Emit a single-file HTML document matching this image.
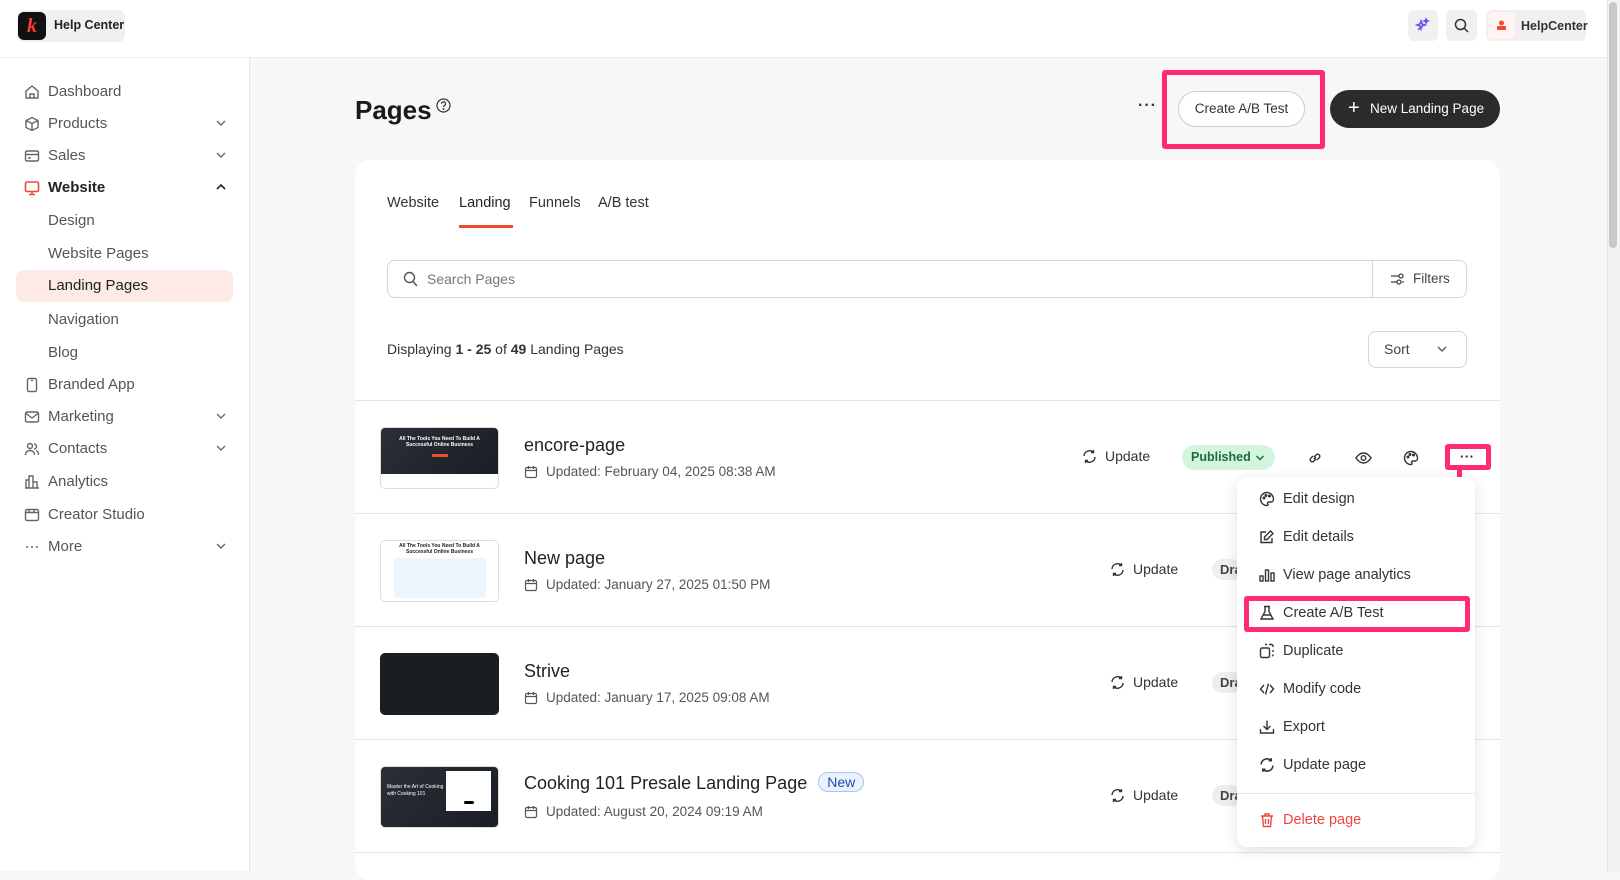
<!DOCTYPE html>
<html><head><meta charset="utf-8"><style>
*{box-sizing:border-box;margin:0;padding:0}
body{width:1620px;height:871px;overflow:hidden;background:#f7f7f7;font-family:"Liberation Sans",sans-serif;color:#222;position:relative}
.abs{position:absolute}
.top{left:0;top:0;width:1607px;height:58px;background:#fff;border-bottom:1px solid #eee}
.side{left:0;top:58px;width:250px;height:813px;background:#fff;border-right:1px solid #e6e6e6}
.ni{position:absolute;left:0;width:250px;font-size:15px;color:#555;height:24px;line-height:24px}
.ni svg{position:absolute;left:24px;top:4px}
.ni .t{position:absolute;left:48px}
.ni .ch{position:absolute;left:214px;top:4px}
.card{left:355px;top:160px;width:1145px;height:720px;background:#fff;border-radius:16px}
.row{position:absolute;left:355px;width:1145px;height:113px;border-top:1px solid #e3e3e3}
.thumb{position:absolute;left:25px;top:26px;width:119px;height:62px;border-radius:5px;border:1px solid #ddd;overflow:hidden}
.rt{position:absolute;left:169px;top:34px;font-size:18px;color:#222}
.rd{position:absolute;left:169px;top:63px;font-size:13.5px;color:#555}
.rd svg{vertical-align:-3px;margin-right:8px}
.upd{position:absolute;font-size:14px;color:#333;top:47px}
.upd svg{vertical-align:-3px;margin-right:8px}
.draft{position:absolute;left:857px;top:45px;background:#eee;border-radius:12px;padding:3px 8px;font-size:13px;font-weight:bold;color:#444;width:30px;overflow:hidden}
.mi{position:absolute;left:0;width:238px;height:30px;font-size:14.5px;color:#333;line-height:30px}
.mi svg{position:absolute;left:22px;top:7px}
.mi span{position:absolute;left:46px}
.pink{border:5px solid #ff2d6f;border-radius:3px}
</style></head><body>
<div class="abs top"></div>
<div class="abs" style="left:17px;top:10px;width:108px;height:32px;background:#f0f0f0;border-radius:7px"></div>
<div class="abs" style="left:18px;top:12px;width:28px;height:28px;background:#111;border-radius:6px;color:#ff3d2e;font:italic bold 20px 'Liberation Serif',serif;text-align:center;line-height:28px">k</div>
<div class="abs" style="left:54px;top:18px;font-size:12.5px;font-weight:bold;color:#222">Help Center</div>
<div class="abs" style="left:1408px;top:10px;width:30px;height:31px;background:#f0f0f0;border-radius:6px"></div>
<svg class="abs" style="left:1415px;top:17px" width="16" height="16" viewBox="0 0 16 16" fill="none" stroke="#6a4cf0" stroke-width="1.5"><path d="M3 13l3-3M6 4l1 3 3 1-3 1-1 3-1-3-3-1 3-1zM11 2l.7 1.5L13 4l-1.3.5L11 6l-.5-1.5L9 4l1.5-.5z"/></svg>
<div class="abs" style="left:1446px;top:10px;width:31px;height:31px;background:#f0f0f0;border-radius:6px"></div>
<svg class="abs" style="left:1454px;top:18px" width="15" height="15" viewBox="0 0 15 15" fill="none" stroke="#333" stroke-width="1.5"><circle cx="6.5" cy="6.5" r="5"/><path d="M10 10l4 4"/></svg>
<div class="abs" style="left:1486px;top:10px;width:100px;height:31px;background:#f0f0f0;border-radius:6px"></div>
<div class="abs" style="left:1488px;top:12px;width:27px;height:27px;background:#fff4f2;border-radius:5px"></div>
<svg class="abs" style="left:1497px;top:20px" width="9" height="10" viewBox="0 0 9 10" fill="#f04a2f"><circle cx="4.5" cy="3" r="2.5"/><rect x="0" y="6" width="9" height="4" rx="1"/></svg>
<div class="abs" style="left:1521px;top:19px;font-size:12.5px;font-weight:bold;color:#333">HelpCenter</div>
<div class="abs" style="left:1607px;top:0;width:13px;height:871px;background:#f2f2f2;border-left:1px solid #e2e2e2"></div>
<div class="abs" style="left:1609px;top:2px;width:8px;height:246px;background:#c8c8c8;border-radius:4px"></div>

<div class="abs side"></div>
<div class="abs" style="left:16px;top:270px;width:217px;height:32px;background:#fde9e5;border-radius:8px"></div>
<div class="ni" style="top:80px"><svg width="16" height="16" viewBox="0 0 16 16" fill="none" stroke="#666" stroke-width="1.4"><path d="M2 7l6-5 6 5v7H2z M6 14v-4h4v4"/></svg><span class="t">Dashboard</span></div>
<div class="ni" style="top:112px"><svg width="16" height="16" viewBox="0 0 16 16" fill="none" stroke="#666" stroke-width="1.4"><path d="M8 1.5l6 3v7l-6 3-6-3v-7zM2 4.5l6 3 6-3M8 7.5v7"/></svg><span class="t">Products</span><svg class="ch" width="14" height="14" viewBox="0 0 14 14" fill="none" stroke="#666" stroke-width="1.4"><path d="M3 5l4 4 4-4"/></svg></div>
<div class="ni" style="top:144px"><svg width="16" height="16" viewBox="0 0 16 16" fill="none" stroke="#666" stroke-width="1.4"><rect x="1.5" y="3" width="13" height="10" rx="1.5"/><path d="M1.5 6.5h13M4 10h3"/></svg><span class="t">Sales</span><svg class="ch" width="14" height="14" viewBox="0 0 14 14" fill="none" stroke="#666" stroke-width="1.4"><path d="M3 5l4 4 4-4"/></svg></div>
<div class="ni" style="top:176px;color:#222;font-weight:bold"><svg width="16" height="16" viewBox="0 0 16 16" fill="none" stroke="#f04a2f" stroke-width="1.6"><rect x="1.5" y="2" width="13" height="9.5" rx="1.5"/><path d="M5 14.5h6M8 11.5v3"/></svg><span class="t">Website</span><svg class="ch" width="14" height="14" viewBox="0 0 14 14" fill="none" stroke="#222" stroke-width="1.6"><path d="M3 9l4-4 4 4"/></svg></div>
<div class="ni" style="top:209px"><span class="t">Design</span></div>
<div class="ni" style="top:242px"><span class="t">Website Pages</span></div>
<div class="ni" style="top:274px;color:#222"><span class="t">Landing Pages</span></div>
<div class="ni" style="top:308px"><span class="t">Navigation</span></div>
<div class="ni" style="top:341px"><span class="t">Blog</span></div>
<div class="ni" style="top:373px"><svg width="16" height="16" viewBox="0 0 16 16" fill="none" stroke="#666" stroke-width="1.4"><rect x="3.5" y="1.5" width="9" height="13" rx="1.5"/><path d="M7 3.5h2"/></svg><span class="t">Branded App</span></div>
<div class="ni" style="top:405px"><svg width="16" height="16" viewBox="0 0 16 16" fill="none" stroke="#666" stroke-width="1.4"><rect x="1.5" y="3" width="13" height="10" rx="1.5"/><path d="M1.5 4l6.5 5 6.5-5"/></svg><span class="t">Marketing</span><svg class="ch" width="14" height="14" viewBox="0 0 14 14" fill="none" stroke="#666" stroke-width="1.4"><path d="M3 5l4 4 4-4"/></svg></div>
<div class="ni" style="top:437px"><svg width="16" height="16" viewBox="0 0 16 16" fill="none" stroke="#666" stroke-width="1.4"><circle cx="6" cy="5" r="2.5"/><path d="M1.5 14c0-3 2-4.5 4.5-4.5s4.5 1.5 4.5 4.5M10 3a2.5 2.5 0 010 5M12 9.5c1.5.5 2.5 2 2.5 4.5"/></svg><span class="t">Contacts</span><svg class="ch" width="14" height="14" viewBox="0 0 14 14" fill="none" stroke="#666" stroke-width="1.4"><path d="M3 5l4 4 4-4"/></svg></div>
<div class="ni" style="top:470px"><svg width="16" height="16" viewBox="0 0 16 16" fill="none" stroke="#666" stroke-width="1.4"><path d="M2 14V6h3v8M5 14V2h4v12M9 14V8h4v6zM1 14h14"/></svg><span class="t">Analytics</span></div>
<div class="ni" style="top:503px"><svg width="16" height="16" viewBox="0 0 16 16" fill="none" stroke="#666" stroke-width="1.4"><rect x="1.5" y="2.5" width="13" height="11" rx="1.5"/><path d="M1.5 5.5h13M5 2.5v3M10 2.5v3"/></svg><span class="t">Creator Studio</span></div>
<div class="ni" style="top:535px"><svg width="16" height="16" viewBox="0 0 16 16" fill="#666"><circle cx="3" cy="8" r="1"/><circle cx="8" cy="8" r="1"/><circle cx="13" cy="8" r="1"/></svg><span class="t">More</span><svg class="ch" width="14" height="14" viewBox="0 0 14 14" fill="none" stroke="#666" stroke-width="1.4"><path d="M3 5l4 4 4-4"/></svg></div>

<div class="abs" style="left:355px;top:95px;font-size:26px;font-weight:bold;color:#1a1a1a">Pages</div>
<svg class="abs" style="left:436px;top:98px" width="15" height="15" viewBox="0 0 15 15" fill="none" stroke="#333" stroke-width="1.2"><circle cx="7.5" cy="7.5" r="6.5"/><path d="M5.5 5.8a2 2 0 113 1.7c-.7.4-1 .8-1 1.5"/><circle cx="7.5" cy="11" r=".4" fill="#333"/></svg>
<div class="abs" style="left:1138px;top:97px;font-size:16px;font-weight:bold;color:#333;letter-spacing:1px">···</div>
<div class="abs pink" style="left:1162px;top:70px;width:163px;height:79px"></div>
<div class="abs" style="left:1178px;top:91px;width:127px;height:36px;background:#fff;border:1px solid #ccc;border-radius:18px;font-size:13.5px;color:#333;text-align:center;line-height:34px">Create A/B Test</div>
<div class="abs" style="left:1330px;top:90px;width:170px;height:38px;background:#2b2b2b;border-radius:19px;color:#fff;font-size:13.5px;line-height:38px"><span style="position:absolute;left:18px;font-size:20px;top:-1px">+</span><span style="position:absolute;left:40px">New Landing Page</span></div>

<div class="abs card"></div>
<div class="abs" style="left:387px;top:195px;font-size:14.5px;color:#333">Website</div>
<div class="abs" style="left:459px;top:195px;font-size:14.5px;color:#222">Landing</div>
<div class="abs" style="left:459px;top:225px;width:54px;height:3px;background:#f04a2f"></div>
<div class="abs" style="left:529px;top:195px;font-size:14.5px;color:#333">Funnels</div>
<div class="abs" style="left:598px;top:195px;font-size:14.5px;color:#333">A/B test</div>
<div class="abs" style="left:387px;top:260px;width:1080px;height:38px;border:1px solid #d6d6d6;border-radius:8px"></div>
<div class="abs" style="left:1372px;top:261px;width:1px;height:36px;background:#d6d6d6"></div>
<svg class="abs" style="left:403px;top:271px" width="15" height="16" viewBox="0 0 15 16" fill="none" stroke="#555" stroke-width="1.4"><circle cx="6.5" cy="6.5" r="5"/><path d="M10 10.5l4 4.5"/></svg>
<div class="abs" style="left:427px;top:271px;font-size:14px;color:#777">Search Pages</div>
<svg class="abs" style="left:1390px;top:272px" width="15" height="14" viewBox="0 0 15 14" fill="none" stroke="#444" stroke-width="1.3"><path d="M1 4h8M12 10h2M1 10h6"/><circle cx="11" cy="4" r="2"/><circle cx="9" cy="10" r="2"/></svg>
<div class="abs" style="left:1413px;top:271px;font-size:13.5px;color:#444">Filters</div>
<div class="abs" style="left:387px;top:341px;font-size:14px;color:#333">Displaying <b>1 - 25</b> of <b>49</b> Landing Pages</div>
<div class="abs" style="left:1368px;top:331px;width:99px;height:37px;border:1px solid #d6d6d6;border-radius:8px;font-size:14px;color:#444;line-height:35px;padding-left:15px">Sort</div>
<svg class="abs" style="left:1436px;top:343px" width="12" height="12" viewBox="0 0 12 12" fill="none" stroke="#555" stroke-width="1.3"><path d="M2 4l4 4 4-4"/></svg>

<div class="row" style="top:400px">
 <div class="thumb" style="background:#fff"><div style="height:46px;background:linear-gradient(135deg,#2a2f38,#1a1e24)"><div style="color:#fff;font-size:5px;text-align:center;padding-top:8px;font-weight:bold">All The Tools You Need To Build A<br>Successful Online Business</div><div style="width:16px;height:3px;background:#f04a2f;margin:6px auto 0"></div></div></div>
 <div class="rt">encore-page</div>
 <div class="rd"><svg width="14" height="14" viewBox="0 0 14 14" fill="none" stroke="#555" stroke-width="1.2"><rect x="1.5" y="2.5" width="11" height="10" rx="1.5"/><path d="M1.5 5.5h11M4.5 1v3M9.5 1v3"/></svg>Updated: February 04, 2025 08:38 AM</div>
 <div class="upd" style="left:727px"><svg width="15" height="15" viewBox="0 0 15 15" fill="none" stroke="#333" stroke-width="1.4"><path d="M2 7a5.5 5.5 0 019.5-3.5M13 8a5.5 5.5 0 01-9.5 3.5M11.5 1v2.5H9M3.5 14v-2.5H6"/></svg>Update</div>
 <div style="position:absolute;left:827px;top:44px;width:93px;height:25px;background:#d4f5dd;border-radius:13px;font-size:12.5px;font-weight:bold;color:#1f6b39;line-height:25px;padding-left:9px">Published <svg style="position:absolute;left:73px;top:8px" width="10" height="10" viewBox="0 0 10 10" fill="none" stroke="#1f6b39" stroke-width="1.5"><path d="M1.5 3l3.5 3.5L8.5 3"/></svg></div>
 <svg style="position:absolute;left:952px;top:49px" width="16" height="16" viewBox="0 0 16 16" fill="none" stroke="#333" stroke-width="1.4"><path d="M7 9l2-2M6 6l-2.5 2.5a2.2 2.2 0 003 3L9 9M10 10l2.5-2.5a2.2 2.2 0 00-3-3L7 7"/></svg>
 <svg style="position:absolute;left:1000px;top:49px" width="17" height="16" viewBox="0 0 17 16" fill="none" stroke="#333" stroke-width="1.4"><path d="M1 8s3-5 7.5-5S16 8 16 8s-3 5-7.5 5S1 8 1 8z"/><circle cx="8.5" cy="8" r="2.3"/></svg>
 <svg style="position:absolute;left:1048px;top:49px" width="16" height="16" viewBox="0 0 16 16" fill="none" stroke="#333" stroke-width="1.4"><path d="M8 1.5a6.5 6.5 0 000 13c1 0 1.3-.8.8-1.5-.6-.8 0-2 1-2H12a2.5 2.5 0 002.5-2.5C14.5 4.5 11.5 1.5 8 1.5z"/><circle cx="5" cy="7" r=".8"/><circle cx="7" cy="4.5" r=".8"/><circle cx="10.5" cy="5" r=".8"/></svg>
</div>
<div class="abs pink" style="left:1445px;top:444px;width:46px;height:26px;background:#fff"></div>
<div class="abs" style="left:1460px;top:449px;font-size:13px;font-weight:bold;color:#222;letter-spacing:.5px">···</div>
<div class="abs" style="left:1457px;top:468px;width:5px;height:130px;background:#ff2d6f"></div>

<div class="row" style="top:513px">
 <div class="thumb" style="background:#fff"><div style="color:#222;font-size:5px;text-align:center;padding-top:2px;font-weight:bold">All The Tools You Need To Build A<br>Successful Online Business</div><div style="margin:3px auto 0;width:92px;height:40px;background:#eef5fd"></div></div>
 <div class="rt">New page</div>
 <div class="rd"><svg width="14" height="14" viewBox="0 0 14 14" fill="none" stroke="#555" stroke-width="1.2"><rect x="1.5" y="2.5" width="11" height="10" rx="1.5"/><path d="M1.5 5.5h11M4.5 1v3M9.5 1v3"/></svg>Updated: January 27, 2025 01:50 PM</div>
 <div class="upd" style="left:755px"><svg width="15" height="15" viewBox="0 0 15 15" fill="none" stroke="#333" stroke-width="1.4"><path d="M2 7a5.5 5.5 0 019.5-3.5M13 8a5.5 5.5 0 01-9.5 3.5M11.5 1v2.5H9M3.5 14v-2.5H6"/></svg>Update</div>
 <div class="draft">Draft</div>
</div>
<div class="row" style="top:626px">
 <div class="thumb" style="background:#1a1e22;border-color:#1a1e22"></div>
 <div class="rt">Strive</div>
 <div class="rd"><svg width="14" height="14" viewBox="0 0 14 14" fill="none" stroke="#555" stroke-width="1.2"><rect x="1.5" y="2.5" width="11" height="10" rx="1.5"/><path d="M1.5 5.5h11M4.5 1v3M9.5 1v3"/></svg>Updated: January 17, 2025 09:08 AM</div>
 <div class="upd" style="left:755px"><svg width="15" height="15" viewBox="0 0 15 15" fill="none" stroke="#333" stroke-width="1.4"><path d="M2 7a5.5 5.5 0 019.5-3.5M13 8a5.5 5.5 0 01-9.5 3.5M11.5 1v2.5H9M3.5 14v-2.5H6"/></svg>Update</div>
 <div class="draft">Draft</div>
</div>
<div class="row" style="top:739px">
 <div class="thumb" style="background:linear-gradient(135deg,#2a2f38,#1a1e24)"><div style="position:absolute;left:6px;top:17px;color:#fff;font-size:5px;line-height:7px">Master the Art of Cooking<br>with Cooking 101</div><div style="position:absolute;left:65px;top:4px;width:45px;height:40px;background:#fff"><div style="width:10px;height:3px;background:#000;margin:30px auto 0;border-radius:2px"></div></div></div>
 <div class="rt" style="top:32px">Cooking 101 Presale Landing Page <span style="display:inline-block;margin-left:6px;font-size:14px;color:#1b4fa8;background:#eaf2fe;border:1px solid #a9c6f2;border-radius:12px;padding:1px 8px;vertical-align:2px">New</span></div>
 <div class="rd" style="top:64px"><svg width="14" height="14" viewBox="0 0 14 14" fill="none" stroke="#555" stroke-width="1.2"><rect x="1.5" y="2.5" width="11" height="10" rx="1.5"/><path d="M1.5 5.5h11M4.5 1v3M9.5 1v3"/></svg>Updated: August 20, 2024 09:19 AM</div>
 <div class="upd" style="left:755px"><svg width="15" height="15" viewBox="0 0 15 15" fill="none" stroke="#333" stroke-width="1.4"><path d="M2 7a5.5 5.5 0 019.5-3.5M13 8a5.5 5.5 0 01-9.5 3.5M11.5 1v2.5H9M3.5 14v-2.5H6"/></svg>Update</div>
 <div class="draft">Draft</div>
</div>
<div class="abs" style="left:355px;top:852px;width:1145px;height:1px;background:#e3e3e3"></div>

<div class="abs" style="left:1237px;top:477px;width:238px;height:370px;background:#fff;border-radius:10px;box-shadow:0 3px 14px rgba(0,0,0,.13)">
 <div class="mi" style="top:7px"><svg width="16" height="16" viewBox="0 0 16 16" fill="none" stroke="#333" stroke-width="1.4"><path d="M8 1.5a6.5 6.5 0 000 13c1 0 1.3-.8.8-1.5-.6-.8 0-2 1-2H12a2.5 2.5 0 002.5-2.5C14.5 4.5 11.5 1.5 8 1.5z"/><circle cx="5" cy="7" r=".8"/><circle cx="7" cy="4.5" r=".8"/><circle cx="10.5" cy="5" r=".8"/></svg><span>Edit design</span></div>
 <div class="mi" style="top:45px"><svg width="16" height="16" viewBox="0 0 16 16" fill="none" stroke="#333" stroke-width="1.4"><path d="M13 9v4.5H2V3h5M11.5 2l2.5 2.5L8 10.5H5.5V8z"/></svg><span>Edit details</span></div>
 <div class="mi" style="top:83px"><svg width="16" height="16" viewBox="0 0 16 16" fill="none" stroke="#333" stroke-width="1.4"><rect x="1" y="9" width="3" height="5"/><rect x="6.5" y="3" width="3" height="11"/><rect x="12" y="6" width="3" height="8"/></svg><span>View page analytics</span></div>
 <div class="mi" style="top:121px"><svg width="16" height="16" viewBox="0 0 16 16" fill="none" stroke="#333" stroke-width="1.4"><path d="M5 1.5h6M6 1.5v5L2 14h12l-4-7.5v-5M4 10h8"/></svg><span>Create A/B Test</span></div>
 <div class="mi" style="top:159px"><svg width="16" height="16" viewBox="0 0 16 16" fill="none" stroke="#333" stroke-width="1.4"><rect x="1.5" y="5" width="9" height="9.5" rx="1.5"/><path d="M6 1.5h2M10 1.5h2.5a1.5 1.5 0 011.5 1.5v1M14 7v2M14 11.5V12a1.5 1.5 0 01-1 1"/></svg><span>Duplicate</span></div>
 <div class="mi" style="top:197px"><svg width="16" height="16" viewBox="0 0 16 16" fill="none" stroke="#333" stroke-width="1.4"><path d="M5 4L1.5 8 5 12M11 4l3.5 4-3.5 4M9.5 2.5l-3 11"/></svg><span>Modify code</span></div>
 <div class="mi" style="top:235px"><svg width="16" height="16" viewBox="0 0 16 16" fill="none" stroke="#333" stroke-width="1.4"><path d="M8 1.5v8.5M4.5 7L8 10.5 11.5 7M1.5 10v4h13v-4"/></svg><span>Export</span></div>
 <div class="mi" style="top:273px"><svg width="16" height="16" viewBox="0 0 15 15" fill="none" stroke="#333" stroke-width="1.4"><path d="M2 7a5.5 5.5 0 019.5-3.5M13 8a5.5 5.5 0 01-9.5 3.5M11.5 1v2.5H9M3.5 14v-2.5H6"/></svg><span>Update page</span></div>
 <div style="position:absolute;left:0;top:316px;width:238px;height:1px;background:#e6e6e6"></div>
 <div class="mi" style="top:328px;color:#ef4444"><svg width="16" height="16" viewBox="0 0 16 16" fill="none" stroke="#ef4444" stroke-width="1.4"><path d="M2 4h12M6 4V2h4v2M3.5 4l1 10.5h7l1-10.5M6.5 7v5M9.5 7v5"/></svg><span>Delete page</span></div>
</div>
<div class="abs pink" style="left:1244px;top:596px;width:226px;height:36px"></div>
</body></html>
